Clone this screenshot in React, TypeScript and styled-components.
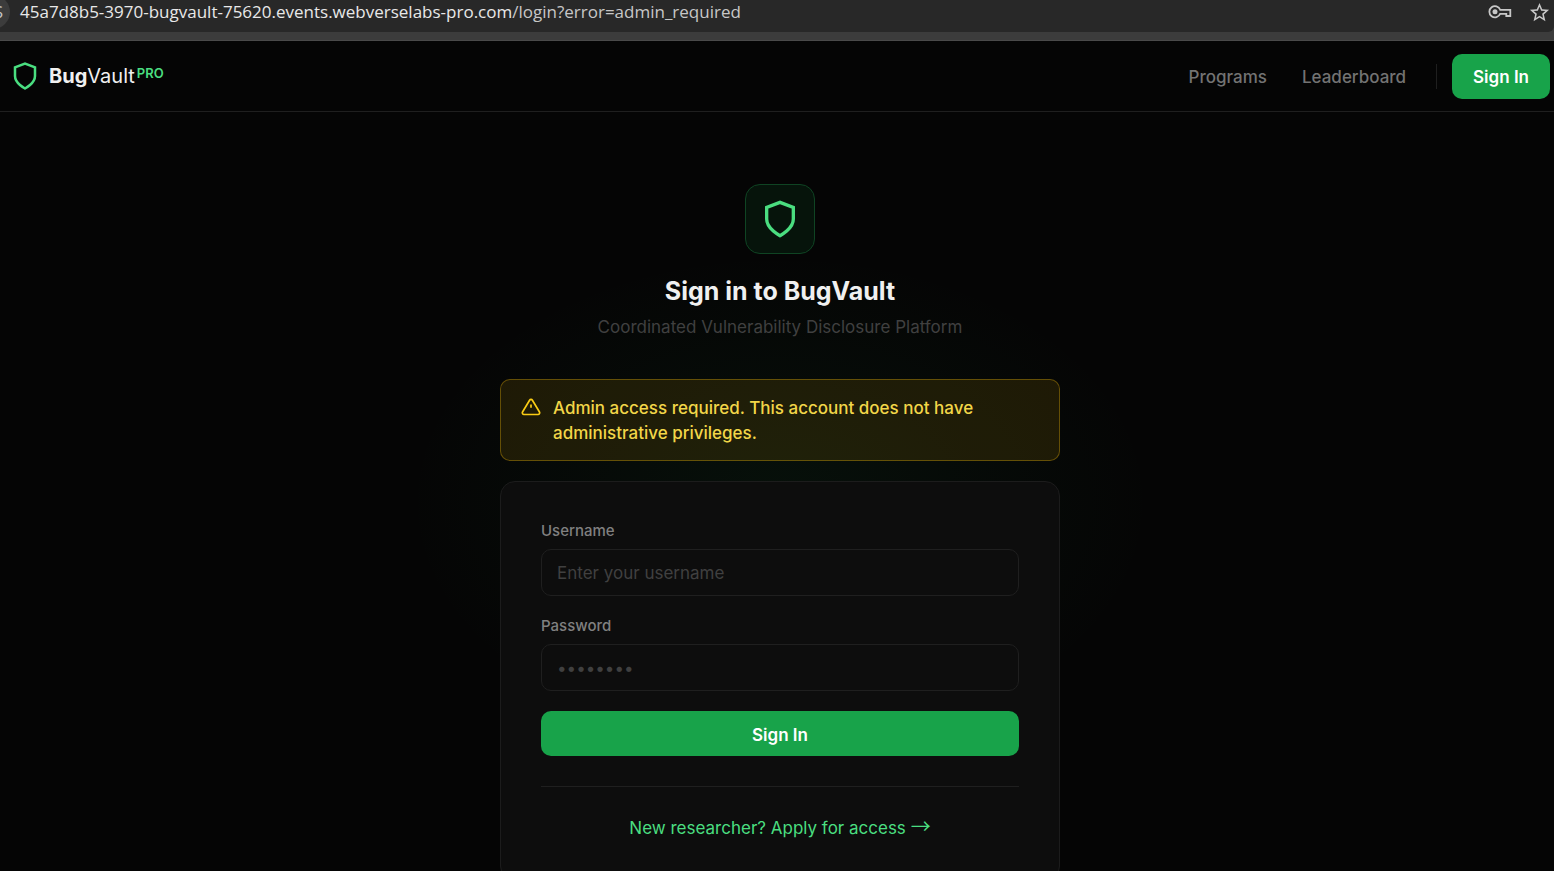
import React from "react";
import styled, { createGlobalStyle } from "styled-components";
import { MdStarBorder } from "react-icons/md";

const Global = createGlobalStyle`
  *, *::before, *::after { box-sizing: border-box; }
  html, body { margin: 0; background: #050505; }
  body { font-family: Inter, "Liberation Sans", sans-serif; color: #f0f0f0; }
  button, input { font-family: inherit; }
`;

const Page = styled.div`
  height: 100vh;
  display: flex;
  flex-direction: column;
  overflow: hidden;
`;

const Browser = styled.div`
  height: 41px;
  flex: none;
  background: #3c3c3c;
  border-bottom: 1px solid #4a4a4a;
`;

const AddressBar = styled.div`
  height: 32px;
  padding: 0 3px 8px 0;
  display: flex;
  align-items: center;
  background: #282828;
  border-bottom-right-radius: 6px;
  overflow: hidden;
`;

const SiteChip = styled.span`
  width: 34px;
  height: 34px;
  margin: 0 10px 0 -24px;
  flex: none;
  border-radius: 50%;
  background: #3c3c3c;
  color: #c7c7c7;
  font: 17px/34px "Open Sans", sans-serif;
  text-align: right;
  padding-right: 7px;
`;

const Url = styled.span`
  flex: 1;
  color: #e8e8e8;
  font: 17px/24px "Open Sans", "Noto Sans", sans-serif;
  white-space: nowrap;
`;

const UrlPath = styled.span`
  color: #c7c7c7;
`;

const BarIcons = styled.div`
  display: flex;
  align-items: center;
  gap: 16px;
  color: #c7c7c7;
`;

const Header = styled.header`
  height: 71px;
  flex: none;
  padding: 0 4px 0 10px;
  display: flex;
  align-items: center;
  justify-content: space-between;
  border-bottom: 1px solid #1f1f1f;
`;

const Brand = styled.a`
  display: flex;
  align-items: center;
  gap: 9px;
  color: #f0f0f0;
  text-decoration: none;
  font-size: 20px;
  line-height: 30px;
`;

const BrandName = styled.span`
  display: flex;
  align-items: flex-start;
  b { font-weight: 700; }
`;

const Pro = styled.span`
  margin-left: 2px;
  color: #4ade80;
  font-size: 13px;
  font-weight: 600;
  line-height: 24px;
`;

const Nav = styled.nav`
  display: flex;
  align-items: center;
`;

const NavLink = styled.a`
  margin-right: 35px;
  padding-top: 2px;
  color: #737373;
  font-size: 17px;
  font-weight: 500;
  text-decoration: none;
`;

const Divider = styled.span`
  width: 1px;
  height: 25px;
  margin: 0 15px 0 -5px;
  background: #1f1f1f;
`;

const Button = styled.button<{ $wide?: boolean }>`
  width: ${(p) => (p.$wide ? "100%" : "auto")};
  height: 45px;
  padding: 2px 21px 0;
  border: 0;
  border-radius: 10px;
  background: #18a34a;
  color: #fff;
  font-size: 17px;
  font-weight: 600;
`;

const Main = styled.main`
  flex: 1;
  min-height: 0;
  padding: 72px 0 0 6px;
  display: flex;
  flex-direction: column;
  align-items: center;
  background: radial-gradient(375px 250px at calc(50% + 3px) 390px, rgba(34, 197, 94, 0.06), transparent);
`;

const Column = styled.div`
  width: 100%;
  max-width: 560px;
  flex: none;
  display: flex;
  flex-direction: column;
  align-items: center;
`;

const Emblem = styled.div`
  width: 70px;
  height: 70px;
  display: flex;
  align-items: center;
  justify-content: center;
  border: 1px solid #0f4423;
  border-radius: 15px;
  background: #06140b;
`;

const Title = styled.h1`
  margin: 20px 0 0;
  font-size: 25px;
  line-height: 34px;
  font-weight: 700;
`;

const Subtitle = styled.p`
  margin: 6px 0 0;
  color: #404040;
  font-size: 17px;
  line-height: 26px;
`;

const Alert = styled.div`
  width: 100%;
  margin: 39px 0 20px;
  padding: 16px 20px 14px;
  display: flex;
  gap: 12px;
  border: 1px solid rgba(234, 179, 8, 0.35);
  border-radius: 10px;
  background: rgba(234, 179, 8, 0.11);
  color: #f2d648;
  font-size: 17px;
  font-weight: 500;
  line-height: 25px;
  svg { flex: none; margin-top: 1px; }
`;

const Card = styled.form`
  width: 100%;
  padding: 39px 40px;
  border: 1px solid #1c1c1c;
  border-radius: 15px;
  background: #0d0d0d;
`;

const Field = styled.div`
  margin-bottom: 20px;
  display: flex;
  flex-direction: column;
  gap: 8px;
`;

const Label = styled.label`
  color: #808080;
  font-size: 15px;
  font-weight: 500;
  line-height: 20px;
`;

const Input = styled.input`
  width: 100%;
  height: 47px;
  padding: 0 15px;
  border: 1px solid #1f1f1f;
  border-radius: 10px;
  outline: 0;
  background: #0d0d0d;
  color: #f5f5f5;
  font-size: 17px;
  &::placeholder { color: #404040; opacity: 1; }
`;

const CardFooter = styled.div`
  margin-top: 30px;
  padding-top: 28px;
  border-top: 1px solid #1f1f1f;
  text-align: center;
  line-height: 26px;
`;

const ApplyLink = styled.a`
  color: #4ade80;
  font-size: 17px;
  text-decoration: none;
`;

const Arrow = styled.span`
  font-family: "Noto Sans CJK SC", sans-serif;
  font-size: 20px;
  line-height: 20px;
`;

const Shield = ({ size }: { size: number }) => (
  <svg width={size} height={size} viewBox="0 0 24 24" fill="none" stroke="#4ade80" strokeWidth="2" aria-hidden="true">
    <path d="M12 22s8-4 8-10V5l-8-3-8 3v7c0 6 8 10 8 10z" />
  </svg>
);

const Warning = () => (
  <svg width="20" height="20" viewBox="0 0 24 24" fill="none" stroke="#facc15" strokeWidth="2" aria-hidden="true">
    <path d="M10.29 3.86 1.82 18a2 2 0 0 0 1.71 3h16.94a2 2 0 0 0 1.71-3L13.71 3.86a2 2 0 0 0-3.42 0z" />
    <path d="M12 9v4" />
  </svg>
);

const KeyIcon = () => (
  <svg width="24" height="24" viewBox="0 0 24 24" fill="none" stroke="currentColor" strokeWidth="1.8" aria-hidden="true">
    <path d="M12.2 9.800H22.300V16h-4v-2.200h-6.100A5.600 5.600 0 1 1 12.200 9.800z" />
    <circle cx="7" cy="11.800" r="2.500" fill="currentColor" stroke="none" />
  </svg>
);

export default function App() {
  return (
    <Page>
      <Global />
      <Browser>
        <AddressBar>
          <SiteChip>S</SiteChip>
          <Url>
            45a7d8b5-3970-bugvault-75620.events.webverselabs-pro.com
            <UrlPath>/login?error=admin_required</UrlPath>
          </Url>
          <BarIcons>
            <KeyIcon />
            <MdStarBorder size={23} />
          </BarIcons>
        </AddressBar>
      </Browser>
      <Header>
        <Brand href="#">
          <Shield size={30} />
          <BrandName>
            <b>Bug</b>Vault<Pro>PRO</Pro>
          </BrandName>
        </Brand>
        <Nav>
          <NavLink href="#programs">Programs</NavLink>
          <NavLink href="#leaderboard">Leaderboard</NavLink>
          <Divider />
          <Button type="button">Sign In</Button>
        </Nav>
      </Header>
      <Main>
        <Column>
          <Emblem>
            <Shield size={40} />
          </Emblem>
          <Title>Sign in to BugVault</Title>
          <Subtitle>Coordinated Vulnerability Disclosure Platform</Subtitle>
          <Alert role="alert">
            <Warning />
            <span>Admin access required. This account does not have administrative privileges.</span>
          </Alert>
          <Card>
            <Field>
              <Label htmlFor="username">Username</Label>
              <Input id="username" type="text" placeholder="Enter your username" />
            </Field>
            <Field>
              <Label htmlFor="password">Password</Label>
              <Input id="password" type="password" placeholder="••••••••" />
            </Field>
            <Button type="button" $wide>
              Sign In
            </Button>
            <CardFooter>
              <ApplyLink href="#apply">
                New researcher? Apply for access <Arrow>→</Arrow>
              </ApplyLink>
            </CardFooter>
          </Card>
        </Column>
      </Main>
    </Page>
  );
}
